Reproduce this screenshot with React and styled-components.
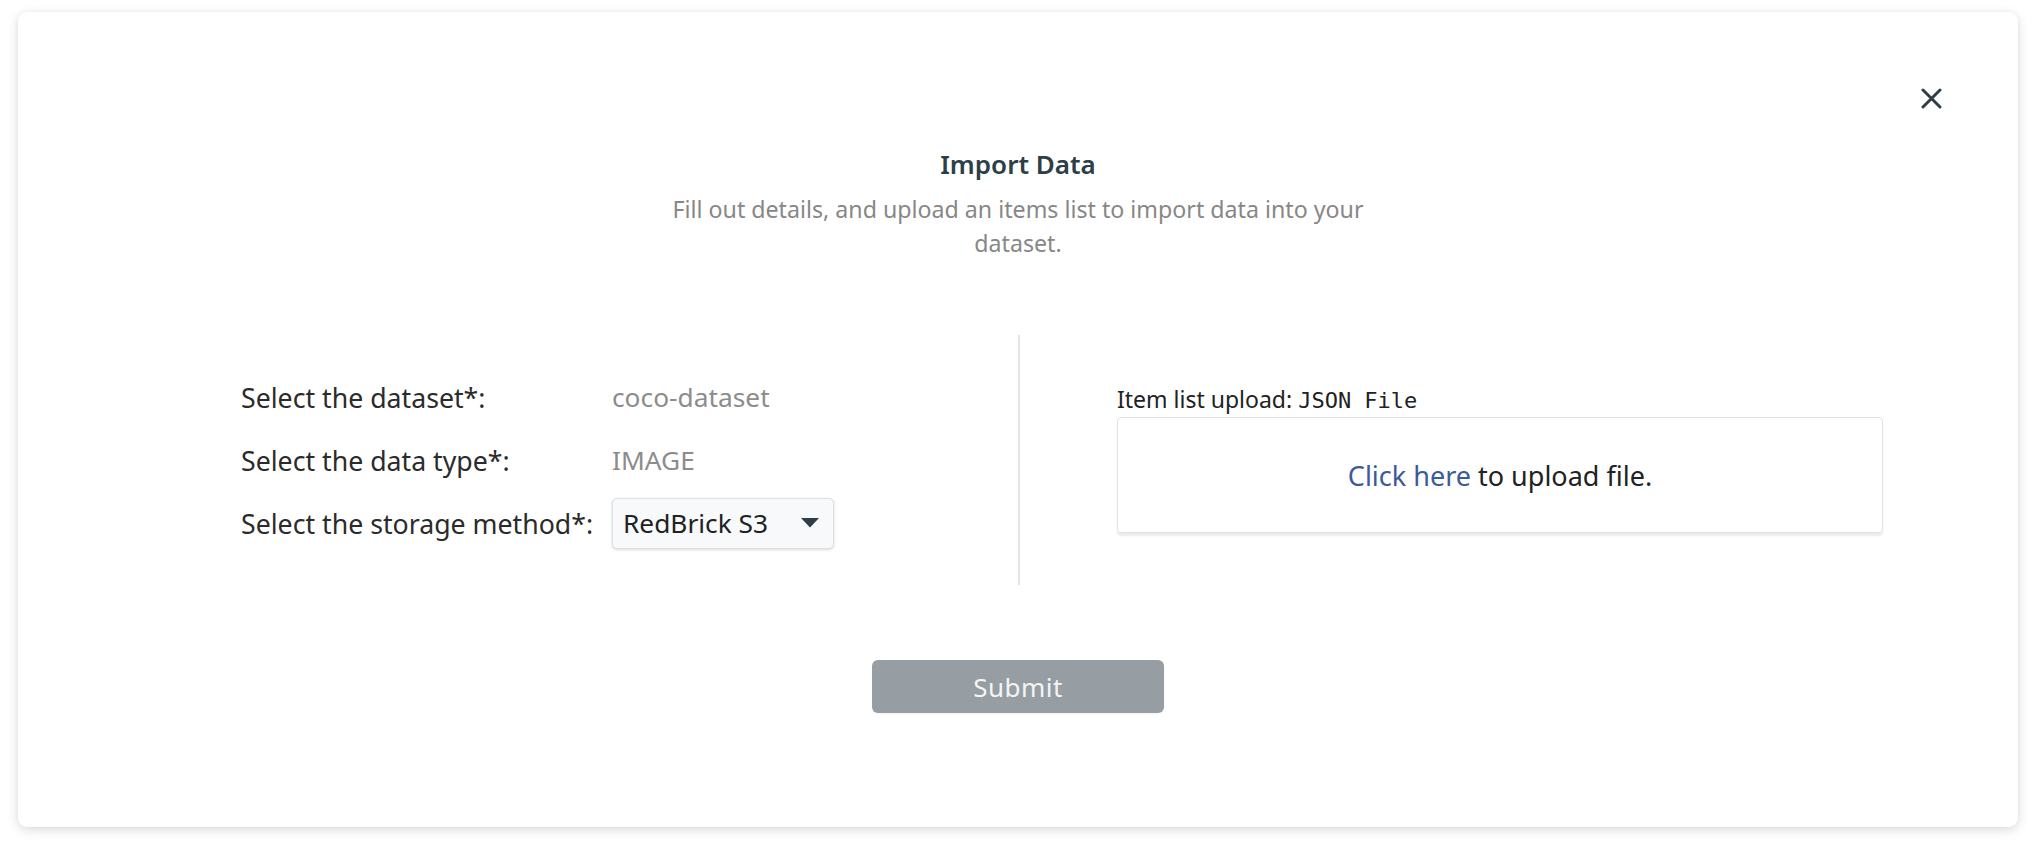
import styled, { createGlobalStyle } from 'styled-components';

const GlobalStyle = createGlobalStyle`
  html, body {
    margin: 0;
    padding: 0;
    background: #ffffff;
  }
  body {
    font-family: "Noto Sans", "Open Sans", sans-serif;
    color: #2b2b2b;
  }
  * {
    box-sizing: border-box;
  }
`

const Page = styled.div`
  padding: 12px 18px 25px;
`

const Card = styled.div`
  height: 815px;
  background: #fff;
  border-radius: 9px;
  box-shadow: 0 3px 12px rgba(0, 0, 0, 0.14), 0 0 4px rgba(0, 0, 0, 0.04);
  display: flex;
  flex-direction: column;
`

const CloseRow = styled.div`
  display: flex;
  justify-content: flex-end;
  padding: 76px 76px 0 0;
`

const CloseButton = styled.button`
  width: 21px;
  height: 21px;
  padding: 0;
  border: none;
  background: none;
  cursor: pointer;
  display: flex;
  align-items: center;
  justify-content: center;
  color: #2d3e48;
`

const Header = styled.div`
  display: flex;
  flex-direction: column;
  align-items: center;
  margin-top: 37px;
`

const Title = styled.h2`
  margin: 0;
  font-size: 26px;
  line-height: 36px;
  font-weight: 600;
  color: #2c3e48;
`

const Description = styled.p`
  margin: 10px 0 0;
  max-width: 700px;
  text-align: center;
  font-size: 23.2px;
  line-height: 34px;
  color: #878787;
`

const Body = styled.div`
  display: flex;
  height: 250px;
  margin-top: 75px;
  padding-left: 223px;
`

const FieldsColumn = styled.div`
  width: 777px;
  display: grid;
  grid-template-columns: 371px auto;
  grid-auto-rows: 63px;
  align-content: center;
  align-items: center;
`

const Label = styled.span`
  font-size: 26.7px;
  color: #2b2b2b;
`

const Value = styled.span`
  font-size: 26.3px;
  color: #8c8c8c;
`

const Select = styled.div`
  width: 222px;
  height: 51px;
  display: flex;
  align-items: center;
  justify-content: space-between;
  padding: 0 14px 0 10px;
  background: #f8f9fa;
  border: 1px solid #dcdfe3;
  border-radius: 5px;
  box-shadow: 0 1px 3px rgba(0, 0, 0, 0.14);
  font-size: 26.3px;
  color: #222;
  cursor: pointer;
`

const Divider = styled.div`
  width: 2px;
  background: #e4e4e4;
`

const UploadColumn = styled.div`
  padding-left: 97px;
  display: flex;
  flex-direction: column;
  justify-content: center;
`

const UploadLabel = styled.div`
  font-size: 23px;
  line-height: 24px;
  color: #222;
  margin-bottom: 4px;
`

const Mono = styled.span`
  font-family: "DejaVu Sans Mono", "Liberation Mono", monospace;
  font-size: 22px;
`

const DropZone = styled.div`
  width: 766px;
  height: 116px;
  display: flex;
  align-items: center;
  justify-content: center;
  border: 1px solid #e2e2e2;
  border-radius: 4px;
  box-shadow: 0 3px 2px rgba(0, 0, 0, 0.08);
  font-size: 27px;
  color: #222;
`

const Link = styled.a`
  color: #3c5a9a;
  text-decoration: none;
  cursor: pointer;
`

const Footer = styled.div`
  display: flex;
  justify-content: center;
  margin-top: 75px;
`

const SubmitButton = styled.button`
  width: 292px;
  height: 53px;
  border: none;
  border-radius: 6px;
  background: #969ea3;
  color: #f4f4f4;
  font-family: "Noto Sans", "Open Sans", sans-serif;
  font-size: 26px;
  letter-spacing: 0.5px;
  box-shadow: 0 1px 2px rgba(0, 0, 0, 0.06);
`

const fields = [
  { label: 'Select the dataset*:', value: 'coco-dataset' },
  { label: 'Select the data type*:', value: 'IMAGE' },
]

function CloseIcon() {
  return (
    <svg width="21" height="21" viewBox="0 0 21 21">
      <path d="M2 2 L19 19 M19 2 L2 19" stroke="currentColor" strokeWidth="3" strokeLinecap="round" />
    </svg>
  )
}

function Caret() {
  return (
    <svg width="18" height="10" viewBox="0 0 18 10">
      <polygon points="0,0 18,0 9,9.5" fill="#2d3e48" />
    </svg>
  )
}

export default function App() {
  return (
    <Page>
      <GlobalStyle />
      <Card>
        <CloseRow>
          <CloseButton aria-label="Close">
            <CloseIcon />
          </CloseButton>
        </CloseRow>
        <Header>
          <Title>Import Data</Title>
          <Description>
            Fill out details, and upload an items list to import data into your dataset.
          </Description>
        </Header>

        <Body>
          <FieldsColumn>
            {fields.map(f => (
              <>
                <Label key={f.label}>{f.label}</Label>
                <Value key={f.value}>{f.value}</Value>
              </>
            ))}
            <Label>Select the storage method*:</Label>
            <Select>
              RedBrick S3
              <Caret />
            </Select>
          </FieldsColumn>
          <Divider />
          <UploadColumn>
            <UploadLabel>
              Item list upload: <Mono>JSON File</Mono>
            </UploadLabel>
            <DropZone>
              <span>
                <Link>Click here</Link> to upload file.
              </span>
            </DropZone>
          </UploadColumn>
        </Body>

        <Footer>
          <SubmitButton>Submit</SubmitButton>
        </Footer>
      </Card>
    </Page>
  );
}
